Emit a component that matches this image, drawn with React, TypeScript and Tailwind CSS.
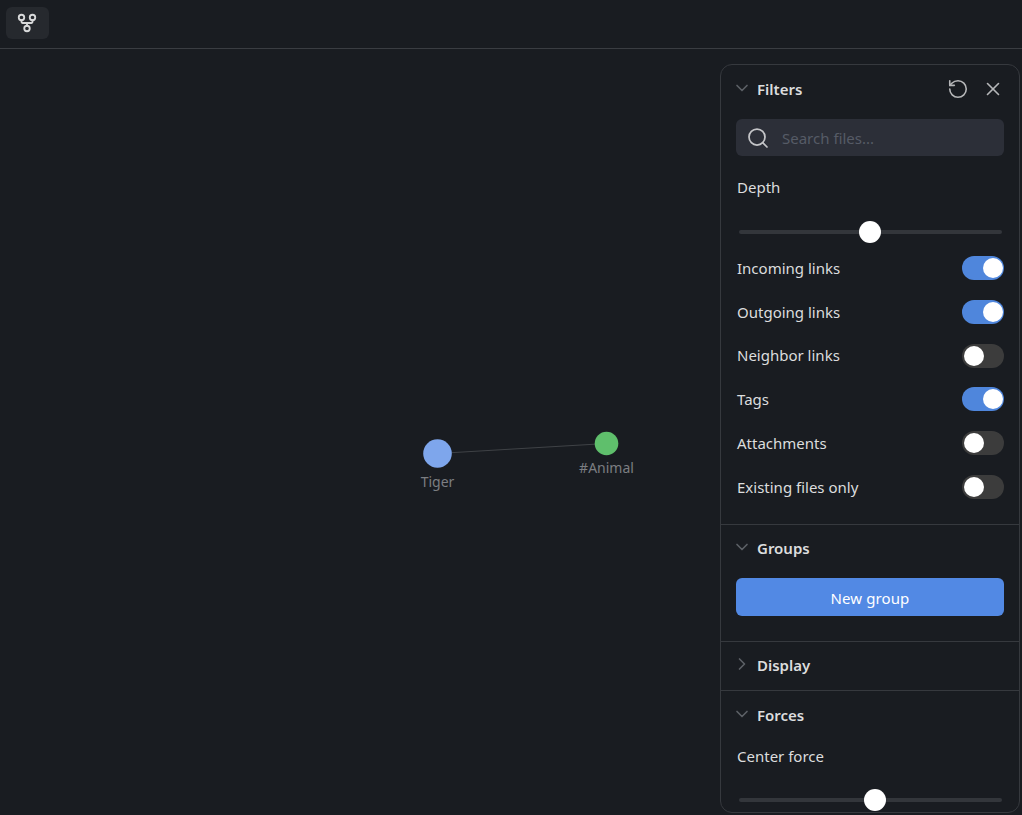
import { ChevronDown, ChevronRight, GitFork, RotateCcw, Search, X } from 'lucide-react';

const FILTERS = [
    { label: 'Incoming links', on: true },
    { label: 'Outgoing links', on: true },
    { label: 'Neighbor links', on: false },
    { label: 'Tags', on: true },
    { label: 'Attachments', on: false },
    { label: 'Existing files only', on: false },
];

function Toggle({ on }: { on: boolean }) {
    return (
        <div className={`h-6 w-[42px] rounded-full flex items-center ${on ? 'bg-[#4f86dc] justify-end pr-px' : 'bg-[#3c3c3c] justify-start pl-[2px]'}`}>
            <div className="h-5 w-5 rounded-full bg-white" />
        </div>
    );
}

function Slider({ left }: { left: string }) {
    return (
        <div className="relative h-[22px] mx-[3px]">
            <div className="absolute left-0 -right-px top-[9px] h-1 rounded-full bg-[#33363b]" />
            <div className={`absolute top-0 h-[22px] w-[22px] rounded-full bg-white ${left}`} />
        </div>
    );
}

function SectionHead({ title, open = true }: { title: string; open?: boolean }) {
    const Icon = open ? ChevronDown : ChevronRight;
    return (
        <div className="flex items-center h-6">
            <Icon className="h-5 w-5 text-[#5c6066] -ml-1 mr-[5px] -mt-[2px] shrink-0" strokeWidth={2} />
            <span className="text-[15px] font-semibold text-[#dcddde]">{title}</span>
        </div>
    );
}

export default function App() {
    return (
        <div className="h-[815px] overflow-hidden bg-[#191c21] flex flex-col font-['Noto_Sans','Open_Sans',sans-serif]">
            <header className="h-[49px] shrink-0 border-b border-[#3a3d42] px-[6px] pt-[7px]">
                <div className="h-8 w-[43px] rounded-md bg-[#26292e] flex items-center justify-center">
                    <GitFork className="h-[22px] w-[22px] text-[#d8d9da] -ml-px" strokeWidth={2} />
                </div>
            </header>

            <main className="relative flex-1">
                {/* graph canvas */}
                <svg className="absolute inset-0 h-full w-full">
                    <line x1="437.5" y1="404.5" x2="606.5" y2="394.5" stroke="#3f4246" strokeWidth="1" />
                    <circle cx="437.5" cy="404.5" r="14.3" fill="#7ea6ec" />
                    <circle cx="606.5" cy="394.5" r="11.8" fill="#5fbf6c" />
                </svg>
                <span className="absolute left-[400px] w-[75px] top-[423px] text-center text-sm text-[#7c7e82]">Tiger</span>
                <span className="absolute left-[566px] w-[81px] top-[409px] text-center text-sm text-[#7c7e82]">#Animal</span>

                <aside className="absolute left-[720px] top-[15px] h-[749px] w-[300px] overflow-hidden rounded-xl border border-[#36393e] bg-[#191c21]">
                    <section className="px-[15px] pt-3 h-[460px] border-b border-[#36393e]">
                        <div className="flex items-center justify-between">
                            <SectionHead title="Filters" />
                            <div className="flex items-center gap-[13px] -mt-[1px]">
                                <RotateCcw className="h-[22px] w-[22px] text-[#b5b6b8]" strokeWidth={1.75} />
                                <X className="h-[22px] w-[22px] text-[#b5b6b8]" strokeWidth={1.75} />
                            </div>
                        </div>
                        <div className="mt-[18px] h-[37px] rounded-md bg-[#2c2f38] flex items-center px-[10px]">
                            <Search className="h-6 w-6 text-[#c4c5c8]" strokeWidth={1.75} />
                            <span className="ml-3 pt-[2px] text-[15px] text-[#565b66]">Search files...</span>
                        </div>
                        <div className="mt-[19px] ml-px text-[15px] leading-[24px] text-[#dcddde]">Depth</div>
                        <div className="mt-[22px]"><Slider left="left-[120px]" /></div>
                        <div className="mt-[13px] flex flex-col gap-[19.8px]">
                            {FILTERS.map(({ label, on }) => (
                                <div key={label} className="flex items-center justify-between h-6">
                                    <span className="ml-px text-[15px] text-[#dcddde]">{label}</span>
                                    <Toggle on={on} />
                                </div>
                            ))}
                        </div>
                    </section>

                    <section className="px-[15px] pt-[11px] h-[117px] border-b border-[#36393e]">
                        <SectionHead title="Groups" />
                        <div className="mt-[18px] h-[38px] rounded-md bg-[#5289e4] flex items-center justify-center pt-[2px] text-[15px] tracking-[0.1px] text-white">New group</div>
                    </section>

                    <section className="px-[15px] pt-[11px] h-[49px] border-b border-[#36393e]">
                        <SectionHead title="Display" open={false} />
                    </section>

                    <section className="px-[15px] pt-[12px]">
                        <SectionHead title="Forces" />
                        <div className="mt-[17px] ml-px text-[15px] leading-[24px] text-[#dcddde]">Center force</div>
                        <div className="mt-[21px]"><Slider left="left-[125px]" /></div>
                    </section>
                </aside>
            </main>
        </div>
    );
}
